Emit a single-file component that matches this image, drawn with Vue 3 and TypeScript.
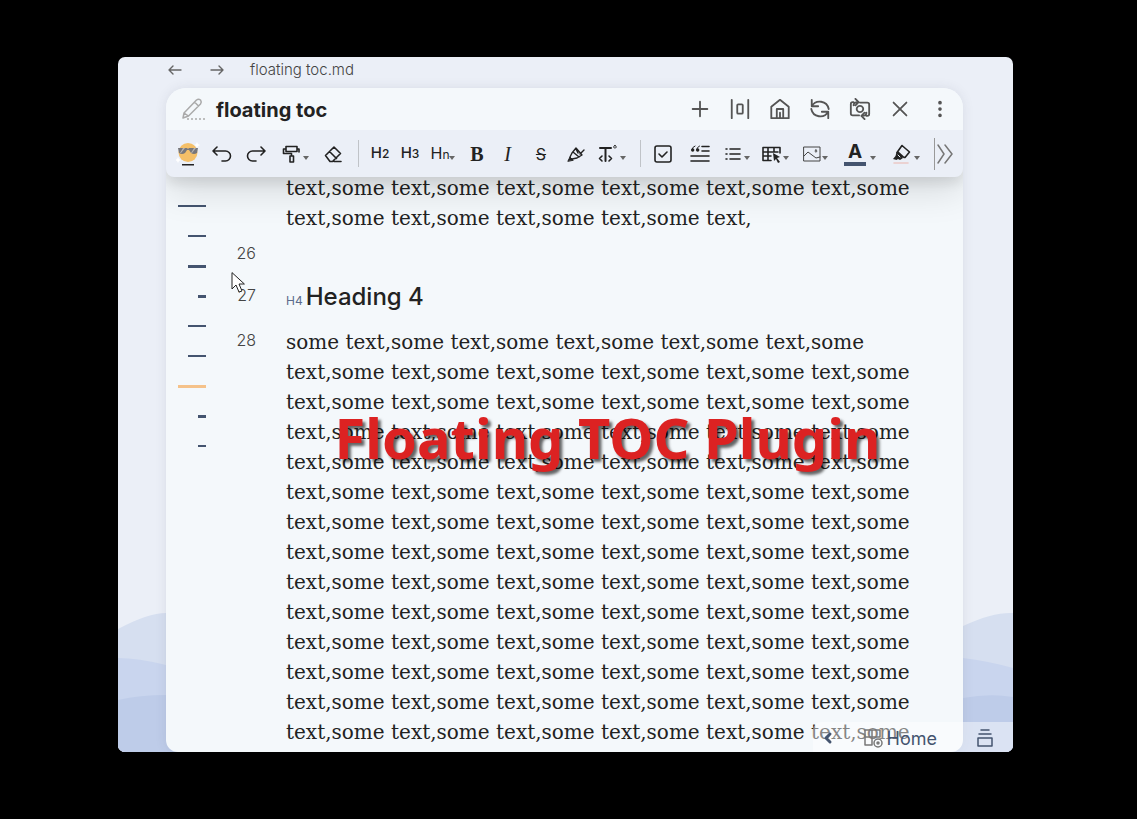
<script setup lang="ts">
interface Stroke {
  d: string
  w?: number
  fill?: string
  color?: string
}
interface Tool {
  name: string
  slot: string
  text?: string
  sub?: string
  caret?: boolean
  strokes?: Stroke[]
}

const tools: Tool[] = [
  { name: 'Emoji', slot: 'emoji' },
  { name: 'Undo', slot: 'w34', strokes: [{ d: 'M5 3 1 7l4 4M1 7h12.500a5 5 0 0 1 0 10H10' }] },
  { name: 'Redo', slot: 'w34', strokes: [{ d: 'M15 3l4 4-4 4M19 7H6.500a5 5 0 0 0 0 10H10' }] },
  {
    name: 'Format brush',
    slot: 'w43',
    caret: true,
    strokes: [{ d: 'M5 2.500h11v5H5zM5 5H2.500v4.500H10.500V12M16 5h2v3M9 12h3.500v6H9z' }],
  },
  {
    name: 'Clear formatting',
    slot: 'w34',
    strokes: [{ d: 'M2.500 11.500 11 3l6.500 6.500-8 8H7zM6.500 7.500l7 7M11 17.500h7' }],
  },
  { name: 'divider', slot: 'divider' },
  { name: 'Heading 2', slot: 'w30', text: 'H', sub: '2' },
  { name: 'Heading 3', slot: 'w30', text: 'H', sub: '3' },
  { name: 'Headings', slot: 'hn', text: 'H', sub: 'n', caret: true },
  { name: 'Bold', slot: 'bold', text: 'B' },
  { name: 'Italic', slot: 'italic', text: 'I' },
  { name: 'Strikethrough', slot: 'strike', text: 'S' },
  {
    name: 'Highlight',
    slot: 'w32',
    strokes: [
      { d: 'M4 13 6 9l4-5 6 7-5 3-5 1M7 8l6 5M10 5l2 4M14 10l4-4', w: 1.4 },
      { d: 'M2 17l2-4 3 3z', fill: '#222', w: 1 },
    ],
  },
  {
    name: 'Text tools',
    slot: 'w40',
    caret: true,
    strokes: [
      { d: 'M2 4h11M7.500 4v13', w: 2 },
      { d: 'M4 12 1.500 14.500 4 17M11 12l2.500 2.500-2.500 2.500' },
      { d: 'M17 1.500a1.300 1.300 0 1 1-.1 0z', w: 1 },
    ],
  },
  { name: 'divider', slot: 'divider' },
  {
    name: 'Check list',
    slot: 'w34',
    strokes: [{ d: 'M3 2h12q2 0 2 2v12q0 2-2 2H3q-2 0-2-2V4q0-2 2-2zM5 10l3 3 5-5' }],
  },
  {
    name: 'Quote',
    slot: 'w38',
    strokes: [
      { d: 'M12 2.500h7M12 7h7M1 12h18M1 17h18' },
      { d: 'M5 2Q2 3 2 6M9.500 2Q7 3 6.500 6', w: 1 },
      { d: 'M1 6a1.700 1.700 0 1 0 3.400 0a1.700 1.700 0 1 0-3.400 0M6 6a1.700 1.700 0 1 0 3.400 0a1.700 1.700 0 1 0-3.400 0', fill: '#222', w: 0 },
    ],
  },
  {
    name: 'List',
    slot: 'w36',
    caret: true,
    strokes: [{ d: 'M6 5h10M6 10h10M6 15h10M2 5h1M2 10h1M2 15h1' }],
  },
  {
    name: 'Table',
    slot: 'w40',
    caret: true,
    strokes: [
      { d: 'M10 16.500H2v-13h17V9M2 8h15M2 12h8M7 3.500v13M13 3.500V8' },
      { d: 'M12 9l7 4-3 1 3 4-2 1-2-4-2 2z', fill: '#222', w: 0 },
    ],
  },
  {
    name: 'Image',
    slot: 'w40 tight',
    caret: true,
    strokes: [
      { d: 'M2 3h16v14H2zM2 12l4-4 8 6 4-1', w: 1, color: '#444' },
      { d: 'M14 6a1 1 0 1 1-.1 0z', w: 1, color: '#444' },
    ],
  },
  { name: 'Font colour', slot: 'fontcolor', text: 'A', caret: true },
  {
    name: 'Background colour',
    slot: 'w42',
    caret: true,
    strokes: [
      { d: 'M10 1.500 17.500 8l-4.500 5.500-4-1-4-4zM6 8l6 5.500' },
      { d: 'M1 15l2.500-3 1-4 6.500 6-3 2-2-1-1.500 1z', fill: '#222', w: 0 },
      { d: 'M6 11l2 2', color: '#ebeff7', w: 1 },
      { d: 'M2 19h14', color: '#ecc9c6' },
    ],
  },
]

const actions: { name: string; strokes: string }[] = [
  { name: 'New tab', strokes: 'M12 4v16M4 12h16' },
  { name: 'Column width', strokes: 'M3 2v20M21 2v20M10 7h4q1 0 1 1v8q0 1-1 1h-4q-1 0-1-1V8q0-1 1-1z' },
  { name: 'Home', strokes: 'M2.500 9.500 12 2l9.500 7.500V22h-19zM8.500 22V12h7v10M12 16v6' },
  { name: 'Refresh', strokes: 'M3 2v7h7M21 22v-7h-7M3 9a10 10 0 0 1 18.500 3M21 15A10 10 0 0 1 2.500 12' },
  {
    name: 'Sync view',
    strokes:
      'M5 4.500H4q-2 0-2 2V17q0 2 2 2h7M19 19.500h1q2 0 2-2V7q0-2-2-2h-8M5 8q0-3.500 5-3.500M7 1l3.500 3.500L7 8M19 16q0 3.500-5 3.500M17 23l-3.500-3.500L17 16M12 8.500a3.500 3.500 0 1 1-.1 0z',
  },
  { name: 'Close', strokes: 'M5 5l14 14M19 5 5 19' },
  { name: 'More options', strokes: 'M12 5v.1M12 12v.1M12 19v.1' },
]

const outline: { level: string; title: string; thick?: boolean; active?: boolean }[] = [
  { level: 'one', title: 'Section 1' },
  { level: 'two', title: 'Section 2' },
  { level: 'two', title: 'Section 3', thick: true },
  { level: 'three', title: 'Section 4', thick: true },
  { level: 'two', title: 'Section 5' },
  { level: 'two', title: 'Section 6' },
  { level: 'one', title: 'Section 7', thick: true, active: true },
  { level: 'three', title: 'Section 8', thick: true },
  { level: 'three', title: 'Section 9' },
]

const tail = 'text,some '.repeat(10) + 'text,'
const body = 'some ' + 'text,some '.repeat(83)
</script>

<template>
  <div class="stage">
    <main class="window">
      <svg class="waves" viewBox="0 0 895 140" preserveAspectRatio="none" aria-hidden="true">
        <path fill="#d6dff0" d="M0 17Q30 1 48 1C200-8 650 60 845 14Q875 0 895 1V140H0z" />
        <path fill="#c9d5ee" d="M0 46Q20 46 48 53C250 100 600 10 845 46Q870 49 895 56V140H0z" />
        <path fill="#becce9" d="M0 88Q22 83 48 83C250 90 650 110 845 86Q872 81 895 85V140H0z" />
      </svg>

      <header class="crumbs">
        <button class="plain" aria-label="Back">
          <svg width="16" height="16" viewBox="0 0 16 16"><path d="M14 8H2M6 4 2 8l4 4" /></svg>
        </button>
        <button class="plain" aria-label="Forward">
          <svg width="16" height="16" viewBox="0 0 16 16"><path d="M2 8h12M10 4l4 4-4 4" /></svg>
        </button>
        <span class="file">floating toc.md</span>
      </header>

      <section class="card">
        <div class="titlebar">
          <svg class="pencil" width="24" height="24" viewBox="0 0 24 24">
            <path d="M3 16 15.500 3q2-1.500 4 0 1.500 2 0 4L7.500 19 2 21zM13.500 5l4 4M3 16l4.500 3" />
            <path class="dotted" d="M6 22h18" />
          </svg>
          <h1>floating toc</h1>
          <div class="actions">
            <button v-for="a in actions" :key="a.name" class="plain" :class="{ dots: a.name === 'More options' }" :aria-label="a.name">
              <svg width="22" height="22" viewBox="0 0 24 24"><path :d="a.strokes" /></svg>
            </button>
          </div>
        </div>

        <div class="toolbar" role="toolbar" aria-label="Formatting">
          <template v-for="(t, i) in tools" :key="i">
            <span v-if="t.slot === 'divider'" class="divider"></span>
            <button v-else class="tool" :class="t.slot" :aria-label="t.name">
              <svg v-if="t.slot === 'emoji'" width="24" height="24" viewBox="0 0 24 24">
                <circle cx="12" cy="10.500" r="9.500" fill="#f4bf68" />
                <path fill="#fff" d="M21 0l1 2 2 1-2 1-1 2-1-2-2-1 2-1zM2 15l1 2 2 1-2 1-1 2-1-2-2-1 2-1z" />
                <path fill="#77777b" d="M2 6h9l1 1 1-1h9l-1 5q-3 2-6 0l-2-3h-2l-2 3q-3 2-6 0z" />
                <path fill="#b5b2b0" d="M7 6h2l-4 5H4zM18 6h2l-4 5h-1z" />
                <path fill="#222" d="M6 22h12v1.500H6z" />
              </svg>
              <svg v-else-if="t.strokes" width="20" height="20" viewBox="0 0 20 20">
                <path
                  v-for="(s, k) in t.strokes"
                  :key="k"
                  :d="s.d"
                  :fill="s.fill ?? 'none'"
                  :stroke="s.color ?? '#222'"
                  :stroke-width="s.w ?? 1.6"
                />
              </svg>
              <span v-else class="glyph">{{ t.text }}<small v-if="t.sub">{{ t.sub }}</small></span>
              <i v-if="t.caret" class="caret"></i>
            </button>
          </template>
          <button class="tool overflow" aria-label="More tools">
            <svg width="18" height="20" viewBox="0 0 18 20"><path d="M2 1l6 9-6 9M9 1l7 9-7 9" /></svg>
          </button>
        </div>

        <div class="workspace">
          <nav class="toc" aria-label="Table of contents">
            <a v-for="o in outline" :key="o.title" href="#" :aria-label="o.title" :class="[o.level, { thick: o.thick, active: o.active }]"></a>
          </nav>
          <article class="editor">
            <span></span>
            <p class="tail">{{ tail }}</p>
            <span class="num low">26</span>
            <p class="blank"></p>
            <span class="num mid">27</span>
            <h2><small>H4</small>Heading 4</h2>
            <span class="num first">28</span>
            <p>{{ body }}</p>
          </article>
        </div>
      </section>

      <footer class="status">
        <button class="plain" aria-label="Collapse">
          <svg width="12" height="16" viewBox="0 0 12 16"><path stroke-width="3" d="M8 4 4 8l4 4" /></svg>
        </button>
        <button class="plain home">
          <svg width="20" height="20" viewBox="0 0 20 20">
            <path d="M9 17H2V2h15v7M2 9h15M9 2v15" />
            <circle cx="15" cy="15" r="4" /><circle cx="15" cy="15" r="1" />
          </svg>
          Home
        </button>
        <button class="plain stack" aria-label="Stacked tabs">
          <svg width="18" height="20" viewBox="0 0 18 20"><path d="M5 2h8M3 6h12M2 10h14v8H2z" /></svg>
        </button>
      </footer>

      <svg class="pointer" width="14" height="22" viewBox="0 0 14 22" aria-hidden="true">
        <path d="M1 1v16l4-4 3 7 3-1-3-7h5z" />
      </svg>
      <div class="banner">Floating TOC Plugin</div>
    </main>
  </div>
</template>

<style>
html,
body {
  background: #000;
}
</style>

<style scoped>
* {
  box-sizing: border-box;
}
.stage {
  display: flex;
  height: 100vh;
  padding: 57px 124px 67px 118px;
  font-family: Inter, 'Liberation Sans', sans-serif;
  color: #222;
}
.window {
  position: relative;
  flex: 1;
  min-width: 0;
  display: flex;
  flex-direction: column;
  overflow: hidden;
  border-radius: 7px;
  background: #ebeff7;
}
button {
  display: flex;
  align-items: center;
  justify-content: center;
  border: 0;
  padding: 0;
  margin: 0;
  background: none;
  font: inherit;
  color: inherit;
}
svg {
  flex: none;
  fill: none;
  stroke-linecap: round;
  stroke-linejoin: round;
}
.plain svg {
  stroke: currentColor;
}
.waves {
  position: absolute;
  left: 0;
  bottom: 0;
  width: 100%;
  height: 140px;
}
.crumbs {
  display: flex;
  align-items: center;
  height: 31px;
  padding: 0 49px 6px;
  color: #666;
}
.crumbs .plain {
  margin-right: 26px;
}
.crumbs svg {
  stroke-width: 1.4;
}
.crumbs .file {
  margin-left: -1px;
  font-size: 15px;
  font-weight: 300;
  color: #444;
}
.card {
  position: relative;
  flex: 1;
  min-height: 0;
  margin: 0 50px 0 48px;
  display: flex;
  flex-direction: column;
  overflow: hidden;
  border-radius: 20px 20px 12px 12px;
  background: #f4f8fb;
  box-shadow: 0 0 12px rgba(60, 60, 80, 0.1);
}
.titlebar {
  position: relative;
  z-index: 2;
  display: flex;
  align-items: center;
  height: 42px;
  flex: none;
  padding: 0 12px 0 15px;
  background: #f4f8fb;
}
.pencil {
  stroke: #aaa;
  stroke-width: 1.5;
}
.pencil .dotted {
  stroke-linecap: butt;
  stroke-dasharray: 2 2;
}
h1 {
  margin: 0 0 0 11px;
  padding-top: 2px;
  font-size: 20px;
  line-height: 24px;
  font-weight: 700;
}
.actions {
  display: flex;
  margin-left: auto;
  color: #555;
}
.actions .plain {
  width: 40px;
}
.actions svg {
  stroke-width: 2;
}
.actions .dots {
  width: 22px;
  margin-left: 9px;
}
.dots svg {
  stroke-width: 4;
}
.toolbar {
  position: relative;
  z-index: 1;
  display: flex;
  align-items: center;
  flex: none;
  height: 47px;
  padding-left: 5px;
  border-radius: 0 0 8px 8px;
  background: #ebeff7;
  box-shadow: 0 6px 12px rgba(0, 0, 0, 0.09), 0 14px 36px rgba(0, 0, 0, 0.12);
}
.tool {
  height: 32px;
  flex: none;
}
.w30 { width: 30px; }
.w32 { width: 32px; }
.w34, .emoji { width: 34px; }
.w36, .hn { width: 36px; }
.w38, .strike { width: 38px; }
.w40 { width: 40px; }
.w42 { width: 42px; }
.w43 { width: 43px; }
.bold { width: 32px; }
.italic { width: 29px; }
.fontcolor { width: 50px; }
.divider {
  flex: none;
  width: 1px;
  height: 27px;
  margin: 0 6px 0 8px;
  background: #c0c3c8;
}
.glyph {
  font-size: 16px;
  line-height: 20px;
}
.w30 .glyph {
  font-size: 15px;
  font-weight: 500;
}
.glyph small {
  font-size: 12px;
}
.bold .glyph {
  font: 700 20px/20px 'Liberation Serif', serif;
}
.italic .glyph {
  font: italic 20px/20px 'Liberation Serif', serif;
}
.strike .glyph {
  text-decoration: line-through 1px;
}
.fontcolor .glyph {
  width: 22px;
  border-bottom: 4px solid #44546f;
  font-size: 19px;
  font-weight: 700;
}
.caret {
  margin: 8px 0 0 2px;
  border: 3px solid transparent;
  border-top: 4px solid #666;
  border-bottom: 0;
}
.hn .caret,
.tight .caret,
.w36 .caret {
  margin-left: 0;
}
.fontcolor .caret {
  margin-left: 4px;
}
.overflow {
  width: 20px;
  margin-left: 7px;
  border-left: 1px solid #999;
}
.overflow svg {
  stroke: #777;
  stroke-width: 1.5;
}
.workspace {
  position: relative;
  flex: 1;
  min-height: 0;
  display: flex;
  overflow: hidden;
}
.toc {
  display: flex;
  flex-direction: column;
  align-items: flex-end;
  flex: none;
  width: 40px;
  padding-top: 14px;
}
.toc a {
  display: flex;
  align-items: center;
  height: 30px;
}
.toc a::before {
  content: '';
  height: 2px;
  width: 18px;
  background: #44546f;
}
.toc a.one::before { width: 28px; }
.toc a.three::before { width: 8px; }
.toc a.thick::before { height: 3px; }
.toc a.active::before { background: #f5c28a; }
.editor {
  flex: 1;
  display: grid;
  grid-template-columns: 50px 1fr;
  column-gap: 30px;
  align-content: start;
  margin-top: -4px;
  padding-right: 40px;
}
.editor p {
  margin: 0;
  font: 20px/30px 'DejaVu Serif', serif;
  color: #222;
}
.editor .blank {
  height: 35px;
}
.num {
  font-size: 16px;
  line-height: 30px;
  text-align: right;
  font-weight: 300;
  color: #444;
}
.low {
  padding-top: 5px;
}
.mid {
  padding-top: 12px;
}
.first {
  line-height: 26px;
}
h2 {
  margin: 0;
  padding-top: 13px;
  height: 59px;
  font-size: 24px;
  line-height: 32px;
  font-weight: 500;
}
h2 small {
  margin-right: 3px;
  font-size: 12px;
  font-weight: 400;
  color: #5b6b8c;
}
.status {
  position: absolute;
  right: 0;
  bottom: 0;
  display: flex;
  align-items: center;
  height: 30px;
  padding: 2px 19px 0 9px;
  border-radius: 8px 0 0 0;
  background: rgba(255, 255, 255, 0.45);
  color: #44546f;
}
.status svg {
  stroke-width: 1.5;
}
.home {
  gap: 4px;
  margin: 0 39px 0 29px;
  font-size: 18px;
}
.home svg {
  stroke: #777;
}
.pointer {
  position: absolute;
  left: 113px;
  top: 215px;
}
.pointer path {
  fill: #fff;
  stroke: #222;
  stroke-width: 1;
}
.banner {
  position: absolute;
  left: 0;
  right: 0;
  top: 344px;
  padding-left: 84px;
  text-align: center;
  white-space: nowrap;
  pointer-events: none;
  font: 700 56px/72px 'Noto Sans', 'Open Sans', sans-serif;
  color: #dc2222;
  text-shadow: 3px 3px 3px rgba(0, 0, 0, 0.6);
}
</style>
